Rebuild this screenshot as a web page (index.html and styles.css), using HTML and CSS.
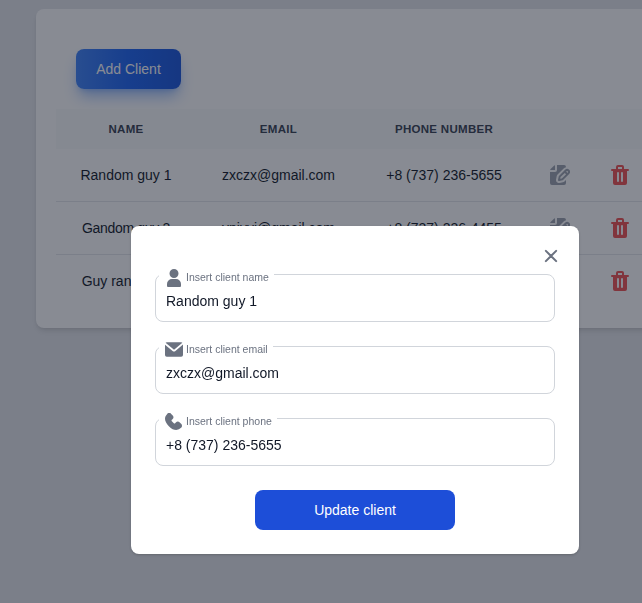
FILE: index.html
```html
<!DOCTYPE html>
<html lang="en">
<head>
<meta charset="utf-8">
<title>Clients</title>
<link rel="stylesheet" href="styles.css">
</head>
<body>
<svg class="sprite" aria-hidden="true">
  <symbol id="edit" viewBox="0 0 20 20">
    <path d="M5 5V.13a2.96 2.96 0 0 0-1.293.749L.879 3.707A2.98 2.98 0 0 0 .13 5H5Z"/>
    <path d="M6.737 11.061a2.961 2.961 0 0 1 .81-1.515l6.117-6.116A4.839 4.839 0 0 1 16 2.141V2a1.97 1.97 0 0 0-1.933-2H7v5a2 2 0 0 1-2 2H0v11a1.969 1.969 0 0 0 1.933 2h12.134A1.97 1.97 0 0 0 16 18v-3.093l-1.546 1.546c-.413.413-.94.695-1.513.81l-3.4.679a2.947 2.947 0 0 1-1.85-.227 2.96 2.96 0 0 1-1.635-3.257l.681-3.397Z"/>
    <path d="M8.961 16a.93.93 0 0 0 .189-.019l3.4-.679a.961.961 0 0 0 .49-.263l6.118-6.117a2.884 2.884 0 0 0-4.079-4.078l-6.117 6.117a.96.96 0 0 0-.263.491l-.679 3.4A.961.961 0 0 0 8.961 16Zm7.477-9.8a.958.958 0 0 1 .68-.281.961.961 0 0 1 .682 1.644l-.315.315-1.36-1.36.313-.318Zm-5.911 5.911 4.236-4.236 1.359 1.359-4.236 4.237-1.7.339.341-1.699Z"/>
  </symbol>
  <symbol id="trash" viewBox="0 0 18 20">
    <path d="M17 4h-4V2a2 2 0 0 0-2-2H7a2 2 0 0 0-2 2v2H1a1 1 0 0 0 0 2h1v12a2 2 0 0 0 2 2h10a2 2 0 0 0 2-2V6h1a1 1 0 1 0 0-2ZM7 2h4v2H7V2Zm1 14a1 1 0 1 1-2 0V8a1 1 0 0 1 2 0v8Zm4 0a1 1 0 0 1-2 0V8a1 1 0 0 1 2 0v8Z"/>
  </symbol>
</svg>

<main class="card">
  <button class="add">Add Client</button>
  <table class="clients">
    <colgroup><col class="c-name"><col class="c-email"><col class="c-phone"><col class="c-edit"><col class="c-del"></colgroup>
    <thead>
      <tr><th>Name</th><th>Email</th><th>Phone number</th><th></th><th></th></tr>
    </thead>
    <tbody>
      <tr><td>Random guy 1</td><td>zxczx@gmail.com</td><td>+8 (737) 236-5655</td><td><svg class="edit"><use href="#edit"/></svg></td><td><svg class="trash"><use href="#trash"/></svg></td></tr>
      <tr><td class="tight">Gandom guy 2</td><td>vnivvi@gmail.com</td><td>+8 (737) 236-4455</td><td><svg class="edit"><use href="#edit"/></svg></td><td><svg class="trash"><use href="#trash"/></svg></td></tr>
      <tr><td>Guy random 3</td><td></td><td></td><td><svg class="edit"><use href="#edit"/></svg></td><td><svg class="trash"><use href="#trash"/></svg></td></tr>
    </tbody>
  </table>
</main>

<div class="overlay">
  <form class="modal">
    <button type="button" class="close" aria-label="Close">
      <svg viewBox="0 0 14 14"><path d="m1 1 6 6m0 0 6 6M7 7l6-6M7 7l-6 6"/></svg>
    </button>
    <div class="field">
      <label for="name"><span class="icon"><svg class="user" viewBox="0 0 14 18"><path d="M7 9a4.5 4.5 0 1 0 0-9 4.5 4.5 0 0 0 0 9Zm2 1H5a5.006 5.006 0 0 0-5 5v2a1 1 0 0 0 1 1h12a1 1 0 0 0 1-1v-2a5.006 5.006 0 0 0-5-5Z"/></svg></span><span class="text">Insert client name</span></label>
      <input id="name" value="Random guy 1">
    </div>
    <div class="field">
      <label for="email"><span class="icon"><svg class="mail" viewBox="0 0 20 16"><path d="m10.036 8.278 9.258-7.79A1.979 1.979 0 0 0 18 0H2A1.987 1.987 0 0 0 .641.541l9.395 7.737Z"/><path d="M11.241 9.817c-.36.275-.801.425-1.255.427-.428 0-.845-.138-1.187-.395L0 2.6V14a2 2 0 0 0 2 2h16a2 2 0 0 0 2-2V2.5l-8.759 7.317Z"/></svg></span><span class="text">Insert client email</span></label>
      <input id="email" value="zxczx@gmail.com">
    </div>
    <div class="field">
      <label for="phone"><span class="icon"><svg class="phone" viewBox="0 0 18 18"><path d="M18 13.446a3.02 3.02 0 0 0-.946-1.985l-1.4-1.4a3.054 3.054 0 0 0-4.218 0l-.7.7a.983.983 0 0 1-1.39 0l-2.1-2.1a.983.983 0 0 1 0-1.389l.7-.7a2.98 2.98 0 0 0 0-4.217l-1.4-1.4a2.824 2.824 0 0 0-4.218 0c-3.619 3.619-3 8.229 1.752 12.979C6.785 16.639 9.45 18 11.912 18a7.175 7.175 0 0 0 5.139-2.325A2.9 2.9 0 0 0 18 13.446Z"/></svg></span><span class="text">Insert client phone</span></label>
      <input id="phone" value="+8 (737) 236-5655">
    </div>
    <button type="button" class="update">Update client</button>
  </form>
</div>
</body>
</html>
```
FILE: styles.css
```css
* { box-sizing: border-box; }
html, body { height: 100%; }
body {
  margin: 0;
  padding: 9px 0 0 36px;
  overflow: hidden;
  background: #e5e7eb;
  color: #111827;
  font: 14px/20px "Liberation Sans", Arial, sans-serif;
}
button, input { font: inherit; border: 0; margin: 0; }
svg { display: block; fill: currentColor; }
.sprite { position: absolute; width: 0; height: 0; }

.card {
  width: 631px;
  height: 319px;
  padding: 40px 20px 20px;
  background: #fff;
  border-radius: 8px;
  box-shadow: 0 4px 6px -1px rgba(0,0,0,.1), 0 2px 4px -2px rgba(0,0,0,.1);
}
.add {
  display: block;
  width: 105px;
  height: 40px;
  margin: 0 0 20px 20px;
  padding: 0;
  color: #fff;
  border-radius: 8px;
  background: linear-gradient(to right, #3f83f8, #1c64f2, #1a56db);
  box-shadow: 0 10px 15px -3px rgba(63,131,248,.5), 0 4px 6px -4px rgba(63,131,248,.5);
}
.clients {
  width: 591px;
  table-layout: fixed;
  border-collapse: separate;
  border-spacing: 0;
  text-align: center;
  white-space: nowrap;
}
.c-name { width: 140px; }
.c-email { width: 165px; }
.c-phone { width: 166px; }
.c-edit { width: 66px; }
.c-del { width: 54px; }
th {
  height: 40px;
  padding: 0;
  background: #f9fafb;
  color: #374151;
  font-size: 11.5px;
  letter-spacing: .3px;
  line-height: 16px;
  text-transform: uppercase;
}
td { height: 53px; padding: 0; border-bottom: 1px solid #e5e7eb; }
tbody tr:last-child td { height: 52px; border-bottom: 0; }
.tight { letter-spacing: -.3px; }
.edit { width: 20px; height: 20px; margin: 0 auto; color: #9ca3af; }
.trash { width: 18px; height: 20px; margin: 0 auto; color: #f05252; }

.overlay {
  position: fixed;
  inset: 0;
  padding: 226px 0 0 131px;
  background: rgba(17,24,39,.5);
}
.modal {
  display: flex;
  flex-direction: column;
  gap: 24px;
  width: 448px;
  height: 328px;
  padding: 24px;
  background: #fff;
  border-radius: 8px;
  box-shadow: 0 1px 3px rgba(0,0,0,.1), 0 1px 2px rgba(0,0,0,.1);
}
.close {
  align-self: flex-end;
  margin: 0 -2px -24px 0;
  padding: 0 0 12px;
  background: none;
  color: #6b7280;
}
.close svg {
  width: 12px;
  height: 12px;
  overflow: visible;
  fill: none;
  stroke: currentColor;
  stroke-width: 2.4;
  stroke-linecap: round;
  stroke-linejoin: round;
}
.field { position: relative; flex: none; height: 48px; }
.field input {
  display: block;
  width: 400px;
  height: 48px;
  padding: 10px 10px 4px;
  border: 1px solid #d1d5db;
  border-radius: 8px;
  background: transparent;
  color: #111827;
  outline: 0;
}
.field label {
  position: absolute;
  left: 4px;
  top: -6px;
  display: flex;
  align-items: center;
  height: 19px;
  padding: 0 5px;
  background: #fff;
  color: #6b7280;
  font-size: 10.5px;
  line-height: 16px;
}
.text { padding-bottom: 2px; }
.icon { display: flex; justify-content: center; width: 20px; margin-right: 2px; }
.user { width: 14px; height: 18px; }
.mail { width: 18px; height: 15px; }
.phone { width: 17px; height: 17px; margin-right: 1px; }
.update {
  flex: none;
  align-self: center;
  width: 200px;
  height: 40px;
  color: #fff;
  background: #1d4ed8;
  border-radius: 8px;
}
```
